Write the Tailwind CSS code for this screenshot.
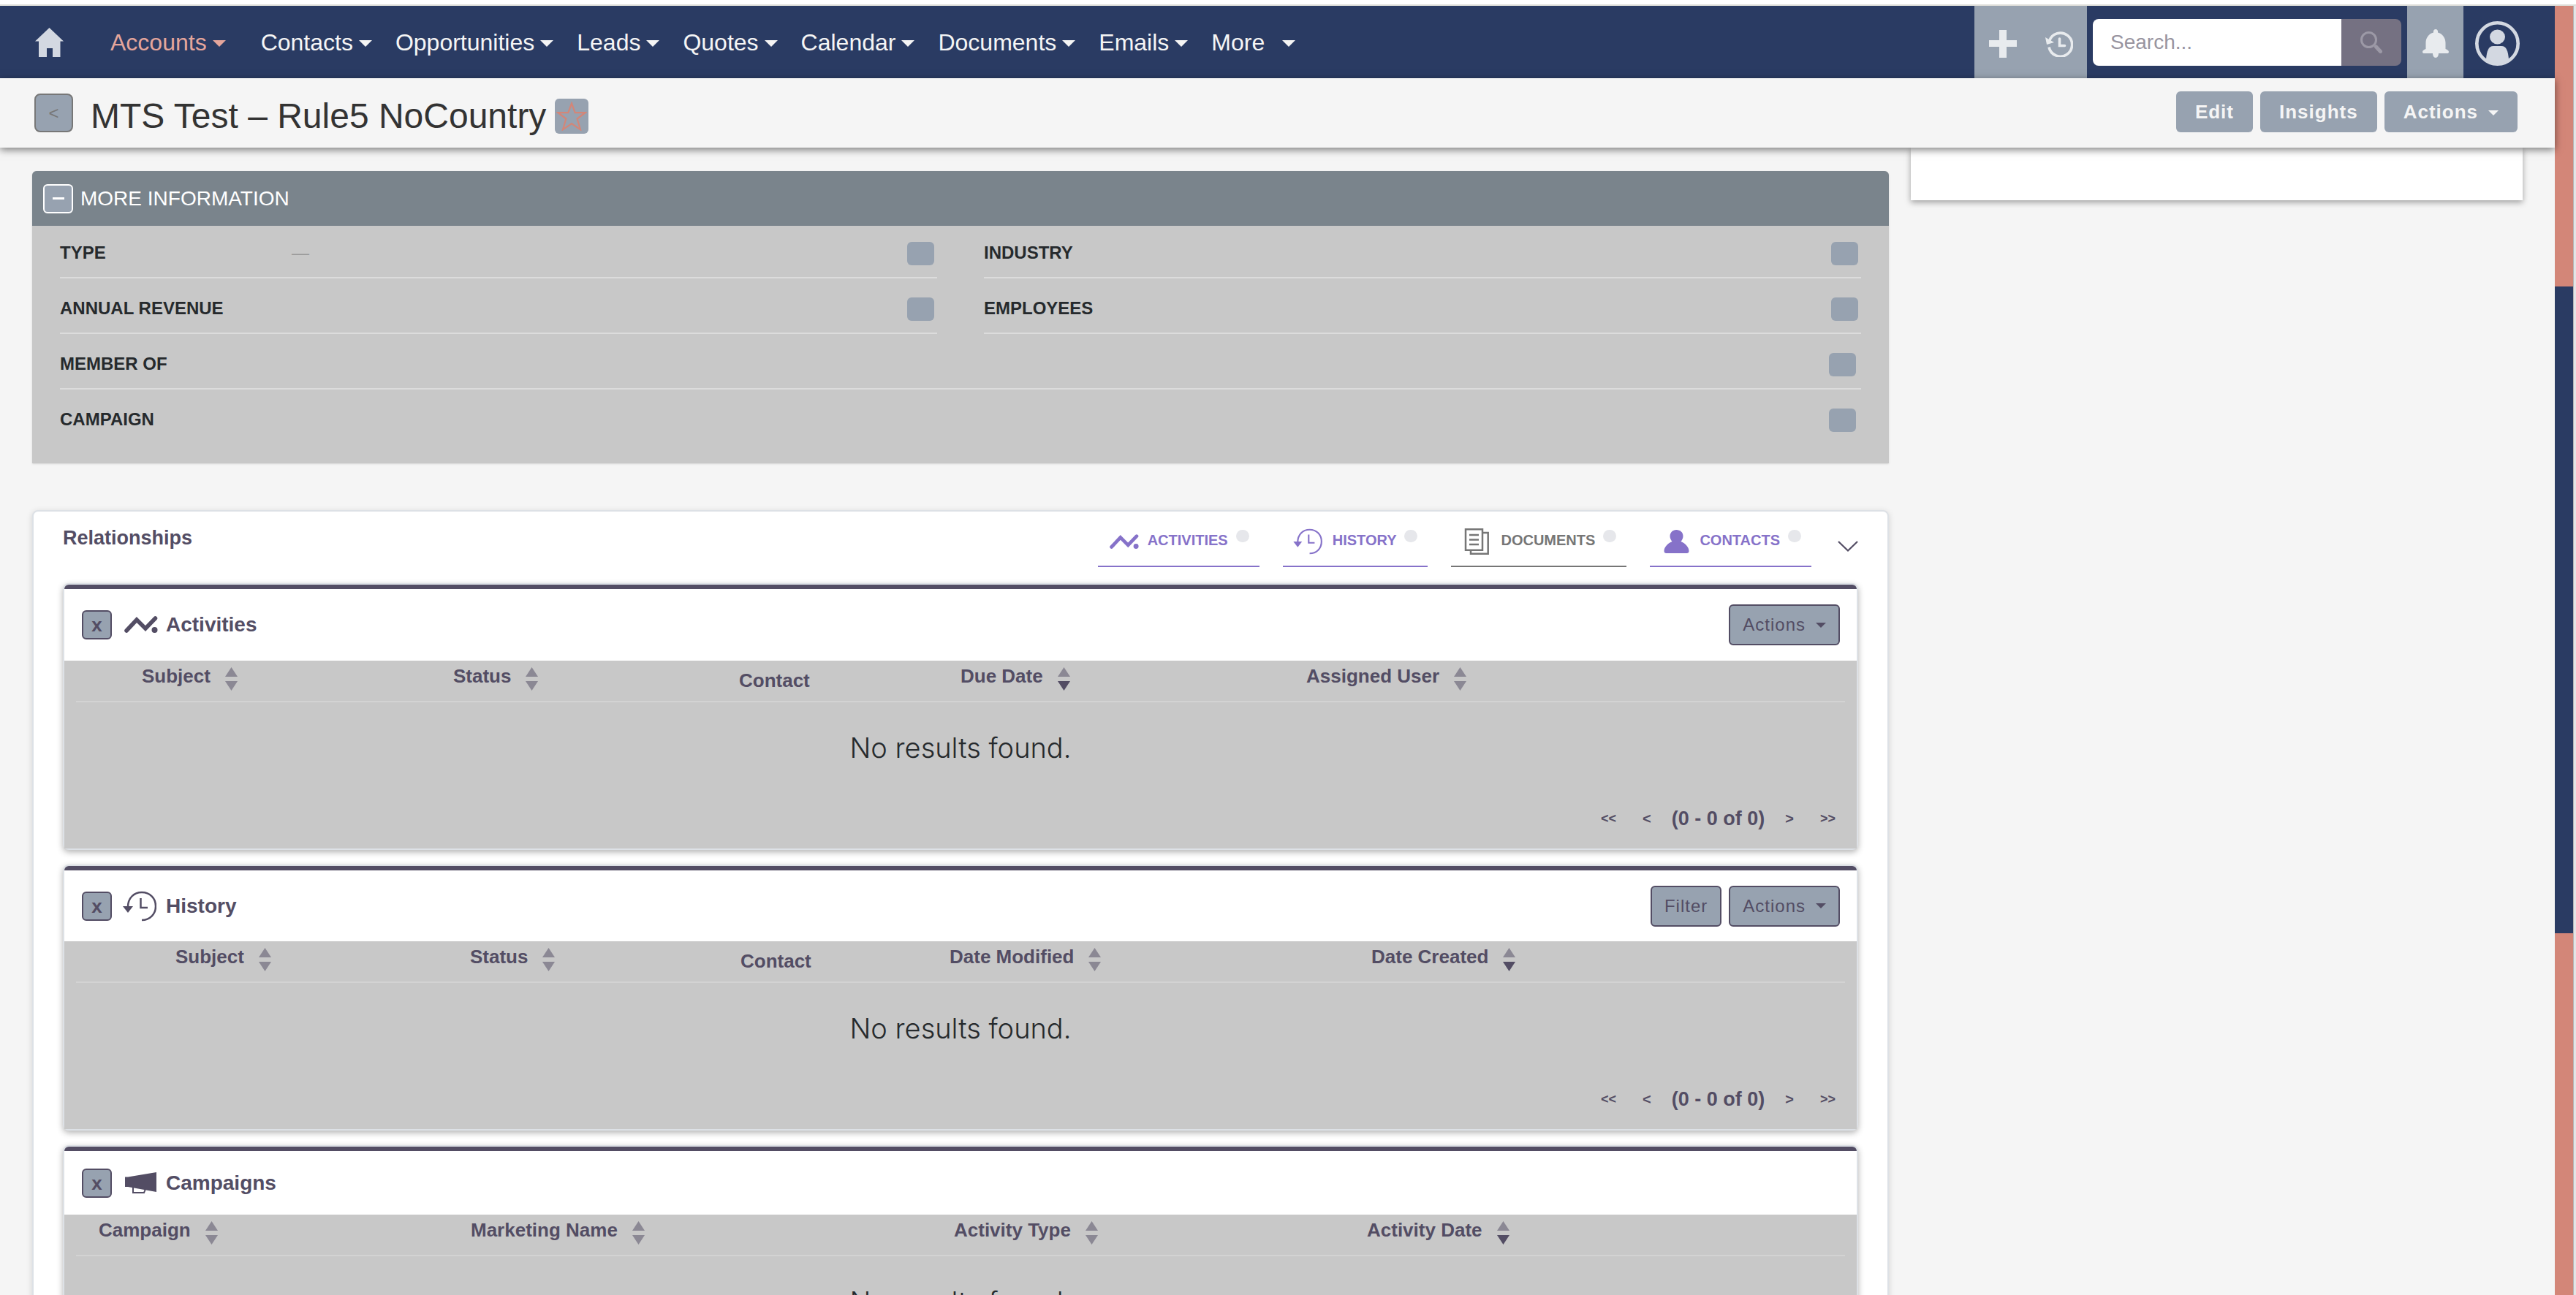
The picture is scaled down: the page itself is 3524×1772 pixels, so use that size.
<!DOCTYPE html>
<html lang="en">
<head>
  <meta charset="UTF-8" />
  <meta name="viewport" content="width=device-width, initial-scale=1.0" />
  <title>MTS Test – Rule5 NoCountry</title>
  <script src="https://cdn.jsdelivr.net/npm/@tailwindcss/browser@4"></script>
</head>
<body class="h-screen overflow-hidden flex flex-col bg-[#f5f5f5] font-['Liberation_Sans',Arial,sans-serif] text-[#534d64]">

  <!-- Shared icons -->
  <svg class="hidden" aria-hidden="true">
    <symbol id="caret" viewBox="0 0 18 9"><path d="M0 0h18l-9 9z" fill="currentColor"/></symbol>
    <symbol id="sort" viewBox="0 0 17 32"><path d="M8.500 0l8.500 13H0z" fill="#8b8894"/><path d="M0 19h17l-8.500 13z" fill="#8b8894"/></symbol>
    <symbol id="sort-desc" viewBox="0 0 17 32"><path d="M8.500 0l8.500 13H0z" fill="#8b8894"/><path d="M0 19h17l-8.500 13z" fill="currentColor"/></symbol>
    <symbol id="activity" viewBox="0 0 46 24"><path d="M3 20L17 5L29 17L42.500 3" fill="none" stroke="currentColor" stroke-width="5.500" stroke-linecap="round" stroke-linejoin="miter"/><circle cx="41.500" cy="19" r="4" fill="currentColor"/></symbol>
    <symbol id="history" viewBox="0 0 46 42"><path d="M7 22C7 10 15 2 26 2S45 10 45 21S37 40 26 40" fill="none" stroke="currentColor" stroke-width="2.500"/><path d="M0 21h14l-7 9z" fill="currentColor"/><path d="M24.500 10v13h9.500" fill="none" stroke="currentColor" stroke-width="2.500"/></symbol>
  </svg>

  <div class="h-2 shrink-0 bg-white border-b-2 border-[#deded9]"></div>

  <div class="flex flex-1 min-h-0">
    <div class="flex-1 min-w-0 flex flex-col">

      <!-- Navbar -->
      <nav class="h-[99px] shrink-0 flex items-center bg-[#2a3b63] text-[#f5f5f5] text-[32px] leading-10">
        <a href="#" aria-label="Home" class="ml-12 mr-16 text-[#d3d8e1]">
          <svg class="w-[39px] h-10" viewBox="0 0 39 40"><path d="M19.500 0L39 18.500h-4.500V40H24V28h-8v12H5V18.500H0z" fill="currentColor"/></svg>
        </a>
        <button class="flex items-center gap-2 mr-12 text-[#e5a69c]">Accounts <svg class="w-[18px] h-[9px] mt-1"><use href="#caret"/></svg></button>
        <div class="flex items-center gap-8">
          <button class="flex items-center gap-2">Contacts <svg class="w-[18px] h-[9px] mt-1"><use href="#caret"/></svg></button>
          <button class="flex items-center gap-2">Opportunities <svg class="w-[18px] h-[9px] mt-1"><use href="#caret"/></svg></button>
          <button class="flex items-center gap-2">Leads <svg class="w-[18px] h-[9px] mt-1"><use href="#caret"/></svg></button>
          <button class="flex items-center gap-2">Quotes <svg class="w-[18px] h-[9px] mt-1"><use href="#caret"/></svg></button>
          <button class="flex items-center gap-2">Calendar <svg class="w-[18px] h-[9px] mt-1"><use href="#caret"/></svg></button>
          <button class="flex items-center gap-2">Documents <svg class="w-[18px] h-[9px] mt-1"><use href="#caret"/></svg></button>
          <button class="flex items-center gap-2">Emails <svg class="w-[18px] h-[9px] mt-1"><use href="#caret"/></svg></button>
          <button class="flex items-center gap-6">More <svg class="w-[18px] h-[9px] mt-1"><use href="#caret"/></svg></button>
        </div>

        <div class="ml-auto flex items-center h-full">
          <button aria-label="Create" class="w-[77px] h-full flex items-center justify-center bg-[#97a2b0] text-[#e8ebee]">
            <svg class="w-[38px] h-[38px] mt-1" viewBox="0 0 38 38"><path d="M14 0h10v14h14v9H24v15H14V23H0v-9h14z" fill="currentColor"/></svg>
          </button>
          <button aria-label="Recently viewed" class="w-[77px] h-full flex items-center justify-center bg-[#97a2b0] text-[#e8ebee]">
            <svg class="w-[38px] h-9 mt-1" viewBox="0 0 38 36"><path d="M5.500 14A16 16 0 1 1 5 22.500" fill="none" stroke="currentColor" stroke-width="3.600"/><path d="M0 9l12 7l-10 3z" fill="currentColor"/><path d="M19.500 11v9.500h7" fill="none" stroke="currentColor" stroke-width="3.600" stroke-linecap="round"/></svg>
          </button>
          <form class="flex mx-2 h-16">
            <input type="text" aria-label="Search" placeholder="Search..." class="w-[340px] h-16 pl-6 rounded-l-lg bg-white text-[28px] placeholder:text-[#98949f]" />
            <button type="button" aria-label="Search" class="w-[82px] h-16 flex items-center justify-center rounded-r-lg bg-[#757182] text-[#9c99a6]">
              <svg class="w-[30px] h-[30px]" viewBox="0 0 30 30"><circle cx="11.500" cy="11.500" r="10" fill="none" stroke="currentColor" stroke-width="3"/><path d="M21.500 21l6 6.500" stroke="currentColor" stroke-width="5" stroke-linecap="round"/></svg>
            </button>
          </form>
          <button aria-label="Notifications" class="w-[77px] h-full flex items-center justify-center bg-[#97a2b0] text-[#e8ebee]">
            <svg class="w-9 h-[39px] mt-1" viewBox="0 0 36 39"><path d="M18 0c2 0 3.500 1.700 3 4.500c6 1.500 10.500 7 10.500 14V27c2.500 1 4.500 2 4.500 4c0 1.500-1 2-2.500 2H22c0 3-1.500 6-4 6s-4-3-4-6H2.500C1 33 0 32.500 0 31c0-2 2-3 4.500-4v-8.500c0-7 4.500-12.500 10.500-14C14.500 1.700 16 0 18 0z" fill="currentColor"/></svg>
          </button>
          <button aria-label="Profile" class="ml-4 mr-12 mt-1 text-[#d3d8e1]">
            <svg class="w-[61px] h-[61px]" viewBox="0 0 61 61"><circle cx="30.500" cy="30.500" r="28.200" fill="none" stroke="currentColor" stroke-width="4.600"/><ellipse cx="30.500" cy="21.500" rx="10.500" ry="10" fill="currentColor"/><path d="M15 52c1-11 3-18 10-18h11c7 0 9 7 10 18c-8 9-23 9-31 0z" fill="currentColor"/></svg>
          </button>
        </div>
      </nav>

      <!-- Record title -->
      <header class="relative z-10 h-[95px] shrink-0 flex items-center pl-[47px] pr-[51px] bg-[#f5f5f5] shadow-[0_3px_10px_rgba(0,0,0,0.5)]">
        <button class="w-[53px] h-[53px] rounded-lg border-2 border-[#777] bg-[#97a2b0] text-[#777] text-2xl">&lt;</button>
        <h1 class="ml-6 pt-2 text-5xl leading-[56px] text-[#333]">MTS Test – Rule5 NoCountry</h1>
        <button aria-label="Favourite" class="ml-3 mt-2 w-[46px] h-12 flex items-center justify-center rounded-md bg-[#97a2b0] text-[#d38678]">
          <svg class="w-[42px] h-10" viewBox="0 0 42 40"><path d="M21 2.500l4.700 12.700h13.800L28.600 23.500l4.400 14.800L21 30L9 38.300l4.400-14.800L2.500 15.200h13.800z" fill="none" stroke="currentColor" stroke-width="2.200"/></svg>
        </button>
        <div class="ml-auto mb-1 flex gap-[10px] text-[26px] leading-8 font-bold tracking-[1px] text-[#f5f5f5]">
          <button class="h-14 px-[26px] rounded-md bg-[#97a2b0]">Edit</button>
          <button class="h-14 px-[26px] rounded-md bg-[#97a2b0]">Insights</button>
          <button class="h-14 px-[26px] rounded-md bg-[#97a2b0] flex items-center gap-[14px]">Actions <svg class="w-[14px] h-[7px] mt-1"><use href="#caret"/></svg></button>
        </div>
      </header>

      <!-- Content -->
      <main class="flex-1 min-h-0 overflow-hidden grid grid-cols-[2540fr_837fr] gap-[30px] items-start px-11">
        <div class="pt-8">

          <!-- More information -->
          <section class="rounded-t-md bg-[#c8c8c8] shadow-sm">
            <div class="h-[75px] flex items-center gap-[10px] pl-[15px] rounded-t-md bg-[#7a848c] text-white text-[28px] leading-8">
              <button aria-label="Collapse" class="w-[41px] h-10 flex items-center justify-center rounded-md border-2 border-white bg-[#97a2b0]"><span class="w-4 h-[3px] bg-white"></span></button>
              <h2>MORE INFORMATION</h2>
            </div>
            <div class="grid grid-cols-2 gap-x-16 gap-y-1 px-[38px] pb-[25px] text-2xl leading-[30px] text-[#262a2d]">
              <div class="flex pt-[22px] pb-4 pr-1 border-b-2 border-[#dcdcdc]">
                <span class="w-[317px] font-bold">TYPE</span><span class="text-[#999]">—</span>
                <button aria-label="Edit type" class="ml-auto w-[37px] h-8 rounded-md bg-[#97a2b0]"></button>
              </div>
              <div class="flex pt-[22px] pb-4 pr-1 border-b-2 border-[#dcdcdc]">
                <span class="font-bold">INDUSTRY</span>
                <button aria-label="Edit industry" class="ml-auto w-[37px] h-8 rounded-md bg-[#97a2b0]"></button>
              </div>
              <div class="flex pt-[22px] pb-4 pr-1 border-b-2 border-[#dcdcdc]">
                <span class="font-bold">ANNUAL REVENUE</span>
                <button aria-label="Edit annual revenue" class="ml-auto w-[37px] h-8 rounded-md bg-[#97a2b0]"></button>
              </div>
              <div class="flex pt-[22px] pb-4 pr-1 border-b-2 border-[#dcdcdc]">
                <span class="font-bold">EMPLOYEES</span>
                <button aria-label="Edit employees" class="ml-auto w-[37px] h-8 rounded-md bg-[#97a2b0]"></button>
              </div>
              <div class="col-span-2 flex pt-[22px] pb-4 pr-[7px] border-b-2 border-[#dcdcdc]">
                <span class="font-bold">MEMBER OF</span>
                <button aria-label="Edit member of" class="ml-auto w-[37px] h-8 rounded-md bg-[#97a2b0]"></button>
              </div>
              <div class="col-span-2 flex pt-[22px] pb-4 pr-[7px] border-b-2 border-transparent">
                <span class="font-bold">CAMPAIGN</span>
                <button aria-label="Edit campaign" class="ml-auto w-[37px] h-8 rounded-md bg-[#97a2b0]"></button>
              </div>
            </div>
          </section>

          <!-- Relationships -->
          <section class="mt-16 px-10 rounded-lg border-2 border-[#dde1e6] bg-white shadow-[0_2px_8px_rgba(0,0,0,0.15)]">
            <div class="h-[98px] flex items-start">
              <h2 class="pt-5 text-[27px] leading-8 font-bold">Relationships</h2>
              <div class="ml-auto flex gap-8 text-xl leading-6 font-bold text-[#8672c9]">
                <a href="#activities" class="h-[76px] flex pt-[27px] pl-4 pr-[14px] border-b-2 border-current">
                  <svg class="w-10 h-[21px] mt-1 mr-3"><use href="#activity"/></svg>
                  <span class="mr-[11px]">ACTIVITIES</span><span class="w-[18px] h-[17px] -mt-0.5 rounded-full bg-[#e6e7eb]"></span>
                </a>
                <a href="#history-panel" class="h-[76px] flex pt-[27px] pl-[14px] pr-[14px] border-b-2 border-current">
                  <svg class="w-10 h-[36px] -mt-1 mr-[14px]"><use href="#history"/></svg>
                  <span class="mr-[11px]">HISTORY</span><span class="w-[18px] h-[17px] -mt-0.5 rounded-full bg-[#e6e7eb]"></span>
                </a>
                <a href="#documents" class="h-[76px] flex pt-[27px] pl-4 pr-[14px] border-b-2 border-current text-[#767676]">
                  <svg class="w-10 h-9 -mt-1 mr-3" viewBox="0 0 40 36" fill="none" stroke="currentColor" stroke-width="2.500"><path d="M4 1.300h23v28.500H4z"/><path d="M27 6h7.700v28.700H11v-5"/><path d="M9 9h13M9 15.500h13M9 22h13"/></svg>
                  <span class="mr-[11px]">DOCUMENTS</span><span class="w-[18px] h-[17px] -mt-0.5 rounded-full bg-[#e6e7eb]"></span>
                </a>
                <a href="#contacts" class="h-[76px] flex pt-[27px] pl-4 pr-[14px] border-b-2 border-current">
                  <svg class="w-10 h-8 -mt-0.5 mr-3" viewBox="0 0 40 32"><path d="M20.500 0c5 0 9 3.500 9 8.500c0 3-1.500 5.500-3 7.500c6 2.500 11 7.500 11 13c0 2-1 3-3 3h-28c-2 0-3-1-3-3c0-5.500 5-10.500 11-13c-1.500-2-3-4.500-3-7.500c0-5 4-8.500 9-8.500z" fill="currentColor"/></svg>
                  <span class="mr-[11px]">CONTACTS</span><span class="w-[18px] h-[17px] -mt-0.5 rounded-full bg-[#e6e7eb]"></span>
                </a>
              </div>
              <button aria-label="More relationships" class="mt-10 ml-9">
                <svg class="w-7 h-4" viewBox="0 0 28 16"><path d="M1 1l13 12.500L27 1" fill="none" stroke="currentColor" stroke-width="2.200"/></svg>
              </button>
            </div>

            <!-- Activities -->
            <section id="activities" class="mb-5 rounded-lg border-2 border-[#dde1e6] bg-white shadow-[0_3px_8px_rgba(0,0,0,0.3)]">
              <div class="h-[104px] flex items-center pl-6 pr-[23px] border-t-[6px] border-[#534d64] rounded-t-md">
                <button class="w-[41px] h-10 rounded-md border-2 border-[#534d64] bg-[#97a2b0] text-[26px] leading-8 font-bold">x</button>
                <svg class="w-[46px] h-6 ml-[17px] mr-[11px]"><use href="#activity"/></svg>
                <h3 class="text-[28px] leading-8 font-bold">Activities</h3>
                <button class="ml-auto h-14 px-[17px] flex items-center gap-[14px] rounded-md border-2 border-[#534d64] bg-[#97a2b0] text-2xl tracking-[1px]">Actions <svg class="w-[14px] h-[7px]"><use href="#caret"/></svg></button>
              </div>
              <div class="px-4 pb-[26px] bg-[#c8c8c8]">
                <table class="w-full table-fixed text-left text-[26px] leading-[30px]">
                  <thead>
                    <tr class="h-14 border-b-2 border-[#d3d3d3] align-top">
                      <th class="w-[516px] pt-1.5 pl-[90px]"><div class="flex gap-5">Subject <svg class="w-[17px] h-8 mt-[3px]"><use href="#sort"/></svg></div></th>
                      <th class="w-[391px] pt-1.5"><div class="flex gap-5">Status <svg class="w-[17px] h-8 mt-[3px]"><use href="#sort"/></svg></div></th>
                      <th class="w-[303px] pt-3">Contact</th>
                      <th class="w-[473px] pt-1.5"><div class="flex gap-5">Due Date <svg class="w-[17px] h-8 mt-[3px]"><use href="#sort-desc"/></svg></div></th>
                      <th class="pt-1.5"><div class="flex gap-5">Assigned User <svg class="w-[17px] h-8 mt-[3px]"><use href="#sort"/></svg></div></th>
                    </tr>
                  </thead>
                  <tbody>
                    <tr><td colspan="5" class="h-[145px] pt-[38px] align-top text-center font-[Inter,sans-serif] font-light text-[38px] leading-[48px] text-[#262a2d]">No results found.</td></tr>
                  </tbody>
                </table>
                <div class="flex items-center justify-end pr-[13px] text-[27px] leading-[30px] font-bold">
                  <button class="text-lg leading-[30px] mr-9">&lt;&lt;</button>
                  <button class="text-xl leading-[30px]">&lt;</button>
                  <span class="mx-7">(0 - 0 of 0)</span>
                  <button class="text-xl leading-[30px]">&gt;</button>
                  <button class="text-lg leading-[30px] ml-9">&gt;&gt;</button>
                </div>
              </div>
            </section>

            <!-- History -->
            <section id="history-panel" class="mb-5 rounded-lg border-2 border-[#dde1e6] bg-white shadow-[0_3px_8px_rgba(0,0,0,0.3)]">
              <div class="h-[103px] flex items-center pl-6 pr-[23px] border-t-[6px] border-[#534d64] rounded-t-md">
                <button class="w-[41px] h-10 rounded-md border-2 border-[#534d64] bg-[#97a2b0] text-[26px] leading-8 font-bold">x</button>
                <svg class="w-[46px] h-[42px] ml-[15px] mr-[13px]"><use href="#history"/></svg>
                <h3 class="text-[28px] leading-8 font-bold">History</h3>
                <button class="ml-auto mr-[10px] h-14 px-[17px] rounded-md border-2 border-[#534d64] bg-[#97a2b0] text-2xl tracking-[1px]">Filter</button>
                <button class="h-14 px-[17px] flex items-center gap-[14px] rounded-md border-2 border-[#534d64] bg-[#97a2b0] text-2xl tracking-[1px]">Actions <svg class="w-[14px] h-[7px]"><use href="#caret"/></svg></button>
              </div>
              <div class="px-4 pb-[26px] bg-[#c8c8c8]">
                <table class="w-full table-fixed text-left text-[26px] leading-[30px]">
                  <thead>
                    <tr class="h-14 border-b-2 border-[#d3d3d3] align-top">
                      <th class="w-[539px] pt-1.5 pl-[136px]"><div class="flex gap-5">Subject <svg class="w-[17px] h-8 mt-[3px]"><use href="#sort"/></svg></div></th>
                      <th class="w-[370px] pt-1.5"><div class="flex gap-5">Status <svg class="w-[17px] h-8 mt-[3px]"><use href="#sort"/></svg></div></th>
                      <th class="w-[286px] pt-3">Contact</th>
                      <th class="w-[577px] pt-1.5"><div class="flex gap-5">Date Modified <svg class="w-[17px] h-8 mt-[3px]"><use href="#sort"/></svg></div></th>
                      <th class="pt-1.5"><div class="flex gap-5">Date Created <svg class="w-[17px] h-8 mt-[3px]"><use href="#sort-desc"/></svg></div></th>
                    </tr>
                  </thead>
                  <tbody>
                    <tr><td colspan="5" class="h-[145px] pt-[38px] align-top text-center font-[Inter,sans-serif] font-light text-[38px] leading-[48px] text-[#262a2d]">No results found.</td></tr>
                  </tbody>
                </table>
                <div class="flex items-center justify-end pr-[13px] text-[27px] leading-[30px] font-bold">
                  <button class="text-lg leading-[30px] mr-9">&lt;&lt;</button>
                  <button class="text-xl leading-[30px]">&lt;</button>
                  <span class="mx-7">(0 - 0 of 0)</span>
                  <button class="text-xl leading-[30px]">&gt;</button>
                  <button class="text-lg leading-[30px] ml-9">&gt;&gt;</button>
                </div>
              </div>
            </section>

            <!-- Campaigns -->
            <section id="campaigns" class="mb-5 rounded-lg border-2 border-[#dde1e6] bg-white shadow-[0_3px_8px_rgba(0,0,0,0.3)]">
              <div class="h-[93px] flex items-center pl-6 pr-[23px] border-t-[6px] border-[#534d64] rounded-t-md">
                <button class="w-[41px] h-10 rounded-md border-2 border-[#534d64] bg-[#97a2b0] text-[26px] leading-8 font-bold">x</button>
                <svg class="w-[43px] h-[29px] ml-[18px] mr-[13px]" viewBox="0 0 43 29"><path d="M0 6.500h4L43 0v27L4 20H0z" fill="currentColor"/><path d="M11 20v8h15l2-5" fill="none" stroke="currentColor" stroke-width="2"/></svg>
                <h3 class="text-[28px] leading-8 font-bold">Campaigns</h3>
              </div>
              <div class="px-4 pb-[26px] bg-[#c8c8c8]">
                <table class="w-full table-fixed text-left text-[26px] leading-[30px]">
                  <thead>
                    <tr class="h-14 border-b-2 border-[#d3d3d3] align-top">
                      <th class="w-[540px] pt-1.5 pl-[31px]"><div class="flex gap-5">Campaign <svg class="w-[17px] h-8 mt-[3px]"><use href="#sort"/></svg></div></th>
                      <th class="w-[661px] pt-1.5"><div class="flex gap-5">Marketing Name <svg class="w-[17px] h-8 mt-[3px]"><use href="#sort"/></svg></div></th>
                      <th class="w-[565px] pt-1.5"><div class="flex gap-5">Activity Type <svg class="w-[17px] h-8 mt-[3px]"><use href="#sort"/></svg></div></th>
                      <th class="pt-1.5"><div class="flex gap-5">Activity Date <svg class="w-[17px] h-8 mt-[3px]"><use href="#sort-desc"/></svg></div></th>
                    </tr>
                  </thead>
                  <tbody>
                    <tr><td colspan="4" class="h-[145px] pt-[38px] align-top text-center font-[Inter,sans-serif] font-light text-[38px] leading-[48px] text-[#262a2d]">No results found.</td></tr>
                  </tbody>
                </table>
              </div>
            </section>
          </section>
        </div>

        <!-- Sidebar card -->
        <aside class="h-[72px] bg-white shadow-[0_3px_8px_rgba(0,0,0,0.35)]"></aside>
      </main>
    </div>

    <!-- Edge stripe -->
    <div class="w-[25px] flex flex-col bg-[#d38678]">
      <div class="flex-[384]"></div>
      <div class="flex-[885] bg-[#2a3b63]"></div>
      <div class="flex-[495]"></div>
    </div>
    <div class="w-1 border-l border-[#b5b5b5] bg-[#e5e5e5]"></div>
  </div>

</body>
</html>
